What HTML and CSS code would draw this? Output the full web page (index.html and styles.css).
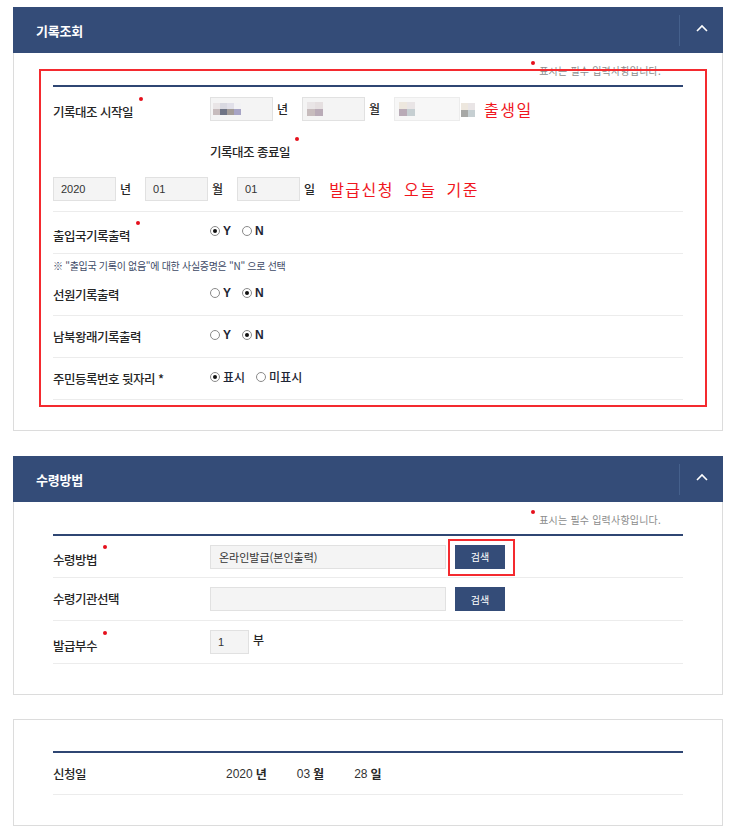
FILE: index.html
```html
<!DOCTYPE html>
<html lang="ko">
<head>
<meta charset="utf-8">
<title>기록조회</title>
<link rel="stylesheet" href="styles.css">
</head>
<body>
<div class="page">

  <section class="panel">
    <header class="panel-head">
      <h2>기록조회</h2>
      <button class="toggle" type="button" aria-label="접기">
        <svg width="12" height="8" viewBox="0 0 12 8"><polyline points="1,7 6,2 11,7" fill="none" stroke="#fff" stroke-width="1.6"/></svg>
      </button>
    </header>
    <div class="panel-body">
      <p class="req-note"><span class="dot"></span>표시는 필수 입력사항입니다.</p>
      <div class="form">
        <div class="row r-start no-line">
          <div class="label req"><span class="txt">기록대조 시작일</span><span class="dot"></span></div>
          <div class="field">
            <div class="inp blur">
              <span class="mosaic m1"><i class="c1"></i><i class="c2"></i><i class="c3"></i><i class="c4"></i><i class="c5"></i><i class="c6"></i><i class="c7"></i><i class="c8"></i></span>
            </div>
            <span class="unit">년</span>
            <div class="inp blur">
              <span class="mosaic m2"><i class="c1"></i><i class="c9"></i><i class="c5"></i><i class="c10"></i></span>
            </div>
            <span class="unit">월</span>
            <div class="inp blur wide-blur">
              <span class="mosaic m2"><i class="c11"></i><i class="c1"></i><i class="c10"></i><i class="c12"></i></span>
              <span class="mosaic m3"><i class="c11"></i><i class="c1"></i><i class="c13"></i><i class="c12"></i></span>
            </div>
            <span class="hint">출생일</span>
          </div>
        </div>
        <div class="row r-end no-line">
          <div class="label req col2"><span class="txt">기록대조 종료일</span><span class="dot dot-far"></span></div>
        </div>
        <div class="row r-enddate">
          <div class="field full">
            <input class="inp" value="2020" readonly>
            <span class="unit">년</span>
            <input class="inp" value="01" readonly>
            <span class="unit">월</span>
            <input class="inp" value="01" readonly>
            <span class="unit unit-last">일</span>
            <span class="hint hint-long">발급신청 오늘 기준</span>
          </div>
        </div>
        <div class="row">
          <div class="label req"><span class="txt">출입국기록출력</span><span class="dot"></span></div>
          <div class="field radios">
            <label class="opt"><span class="radio on"></span>Y</label>
            <label class="opt"><span class="radio"></span>N</label>
          </div>
        </div>
        <p class="guide">※ "출입국 기록이 없음"에 대한 사실증명은 "N" 으로 선택</p>
        <div class="row">
          <div class="label"><span class="txt">선원기록출력</span></div>
          <div class="field radios">
            <label class="opt"><span class="radio"></span>Y</label>
            <label class="opt"><span class="radio on"></span>N</label>
          </div>
        </div>
        <div class="row">
          <div class="label"><span class="txt">남북왕래기록출력</span></div>
          <div class="field radios">
            <label class="opt"><span class="radio"></span>Y</label>
            <label class="opt"><span class="radio on"></span>N</label>
          </div>
        </div>
        <div class="row">
          <div class="label"><span class="txt">주민등록번호 뒷자리 *</span></div>
          <div class="field radios">
            <label class="opt ko"><span class="radio on"></span>표시</label>
            <label class="opt ko"><span class="radio"></span>미표시</label>
          </div>
        </div>
      </div>
      <div class="mark mark-form"></div>
    </div>
  </section>

  <section class="panel">
    <header class="panel-head">
      <h2>수령방법</h2>
      <button class="toggle" type="button" aria-label="접기">
        <svg width="12" height="8" viewBox="0 0 12 8"><polyline points="1,7 6,2 11,7" fill="none" stroke="#fff" stroke-width="1.6"/></svg>
      </button>
    </header>
    <div class="panel-body">
      <p class="req-note"><span class="dot"></span>표시는 필수 입력사항입니다.</p>
      <div class="form">
        <div class="row tall first">
          <div class="label req"><span class="txt">수령방법</span><span class="dot"></span></div>
          <div class="field">
            <input class="inp inp-wide" value="온라인발급(본인출력)" readonly>
            <span class="btn-wrap"><button class="btn" type="button">검색</button><span class="mark mark-btn"></span></span>
          </div>
        </div>
        <div class="row tall">
          <div class="label"><span class="txt">수령기관선택</span></div>
          <div class="field">
            <input class="inp inp-wide" value="" readonly>
            <span class="btn-wrap"><button class="btn" type="button">검색</button></span>
          </div>
        </div>
        <div class="row tall">
          <div class="label req"><span class="txt">발급부수</span><span class="dot"></span></div>
          <div class="field">
            <input class="inp inp-num" value="1" readonly>
            <span class="unit unit-up">부</span>
          </div>
        </div>
      </div>
    </div>
  </section>

  <section class="panel panel-plain">
    <div class="panel-body">
      <div class="form">
        <div class="row">
          <div class="label"><span class="txt">신청일</span></div>
          <div class="field date">
            <span class="num">2020</span><span class="unit">년</span>
            <span class="num">03</span><span class="unit">월</span>
            <span class="num">28</span><span class="unit">일</span>
          </div>
        </div>
      </div>
    </div>
  </section>

</div>
</body>
</html>
```
FILE: styles.css
```css
* { box-sizing: border-box; }

body {
  margin: 0;
  background: #fff;
  color: #333;
  font-family: "Noto Sans CJK KR", "Noto Sans", sans-serif;
}

.page {
  width: 740px;
  padding: 7px 0 0 13px;
}

.panel {
  position: relative;
  width: 710px;
  background: #fff;
  border: 1px solid #dcdcdc;
  border-top: none;
}
.panel + .panel { margin-top: 25px; }
.panel-plain { border-top: 1px solid #dcdcdc; margin-top: 24px !important; }

.panel-head {
  display: flex;
  align-items: center;
  height: 46px;
  margin: 0 -1px;
  padding-left: 23px;
  background: #344c78;
}
.panel-head h2 {
  flex: 1;
  margin: 0;
  font-size: 13px;
  font-weight: 700;
  color: #fff;
  letter-spacing: -0.2px;
}
.toggle {
  display: flex;
  align-items: center;
  justify-content: center;
  width: 44px;
  height: 31px;
  padding: 0 0 4px 0;
  border: 0;
  border-left: 1px solid #45608c;
  background: transparent;
}

.panel-body {
  position: relative;
  padding: 0 39px 30px 39px;
}
.panel-plain .panel-body { padding-top: 31px; padding-bottom: 30px; }

.req-note {
  height: 32px;
  margin: 0;
  padding: 11px 22px 0 0;
  text-align: right;
  font-size: 10px;
  line-height: 14px;
  color: #8c8c8c;
  letter-spacing: 0.2px;
}
.dot {
  display: inline-block;
  width: 4px;
  height: 4px;
  border-radius: 50%;
  background: #e5101c;
  vertical-align: top;
}
.req-note .dot { margin-right: 4px; position: relative; top: -3px; }

.form { border-top: 2px solid #2f4673; }

.row {
  display: grid;
  grid-template-columns: 157px 1fr;
  align-items: center;
  min-height: 42px;
  border-bottom: 1px solid #ececec;
}
.row.no-line { border-bottom: 0; }
.row.tall { min-height: 43px; }
.row.tall.first { min-height: 42px; }
.r-start { min-height: 43px; }
.r-end { min-height: 36px; }
.r-enddate { min-height: 46px; }

.label {
  display: flex;
  align-items: flex-start;
  font-size: 12.5px;
  font-weight: 500;
  color: #262626;
  letter-spacing: -0.5px;
}
.label .txt { line-height: 16px; }
.label.req .txt { margin-top: 7px; }
.label .dot { margin-left: 6px; }
.label .dot-far { margin-left: 5px; }
.col2 { grid-column: 2; }

.field {
  display: flex;
  align-items: center;
}
.field.full { grid-column: 1 / -1; }

.inp {
  display: flex;
  align-items: center;
  width: 63px;
  height: 24px;
  padding: 0 0 0 7px;
  border: 1px solid #e1e1e1;
  background: #f4f4f4;
  font-family: "Liberation Sans", "Noto Sans CJK KR", sans-serif;
  font-size: 11px;
  color: #333;
  outline: none;
}
.inp.blur { padding: 0 0 0 2px; position: relative; }
.inp.wide-blur {
  width: 66px;
  background: #f7f7f7;
  border-color: #ececec;
  margin-right: 14px;
}
.inp-wide { width: 236px; font-family: "Noto Sans CJK KR", sans-serif; padding-left: 8px; }
.inp-num { width: 39px; padding-left: 7px; }

.mosaic {
  display: grid;
  grid-template-columns: repeat(4, 7px);
  grid-auto-rows: 6px;
  filter: blur(0.7px);
}
.mosaic i { display: block; }
.m2 { grid-template-columns: repeat(2, 8px); grid-auto-rows: 7px; margin-left: 2px; }
.m3 {
  grid-template-columns: repeat(2, 7px);
  grid-auto-rows: 7px;
  position: absolute;
  left: 66px;
  top: 5px;
}
.c1 { background: #e9e5e6; }
.c2 { background: #d9d9e1; }
.c3 { background: #e1e0e9; }
.c4 { background: #f2f2f4; }
.c5 { background: #c7bcbd; }
.c6 { background: #6f7485; }
.c7 { background: #a39c98; }
.c8 { background: #a7a4c5; }
.c9 { background: #e5dfe0; }
.c10 { background: #b9abb7; }
.c11 { background: #ede7de; }
.c12 { background: #c6cfd2; }
.c13 { background: #a7a8a6; }

.unit {
  margin: 0 14px 0 4px;
  font-size: 12px;
  font-weight: 500;
  color: #262626;
}
.unit-last { margin-right: 0; }
.unit-up { margin-top: -5px; }

.hint {
  margin-left: 10px;
  font-size: 16px;
  letter-spacing: 1.5px;
  color: #f0161e;
}
.hint-long { margin-left: 14px; word-spacing: 4px; }

.radios { padding-bottom: 4px; }
.opt {
  display: inline-flex;
  align-items: center;
  margin-right: 11px;
  font-family: "Liberation Sans", "Noto Sans CJK KR", sans-serif;
  font-size: 12px;
  font-weight: 700;
  color: #1e2535;
}
.opt.ko {
  font-family: "Noto Sans CJK KR", sans-serif;
  font-weight: 500;
  margin-right: 11px;
}
.radio {
  display: inline-flex;
  align-items: center;
  justify-content: center;
  width: 10px;
  height: 10px;
  margin-right: 3px;
  border: 1px solid #8a8a8a;
  border-radius: 50%;
  background: #fff;
}
.radio.on::after {
  content: "";
  width: 4px;
  height: 4px;
  border-radius: 50%;
  background: #111;
}

.guide {
  height: 20px;
  margin: 0;
  padding-top: 5px;
  font-size: 10px;
  line-height: 14px;
  color: #3e4a66;
  letter-spacing: -0.3px;
}

.btn-wrap { position: relative; display: inline-flex; margin-left: 9px; }
.btn {
  width: 50px;
  height: 24px;
  padding: 0;
  border: 0;
  background: #344c78;
  color: #fff;
  font-family: "Noto Sans CJK KR", sans-serif;
  font-size: 10px;
}

.mark { position: absolute; border: 2px solid #f42a2f; pointer-events: none; }
.mark-form { left: 25px; top: 16px; width: 668px; height: 338px; }
.mark-btn { left: -7px; top: -6px; right: -10px; bottom: -7px; }

.date { padding-left: 16px; }
.date .num {
  font-family: "Liberation Sans", sans-serif;
  font-size: 12px;
  color: #333;
}
.date .unit { margin: 0 30px 0 3px; font-weight: 700; }
```
